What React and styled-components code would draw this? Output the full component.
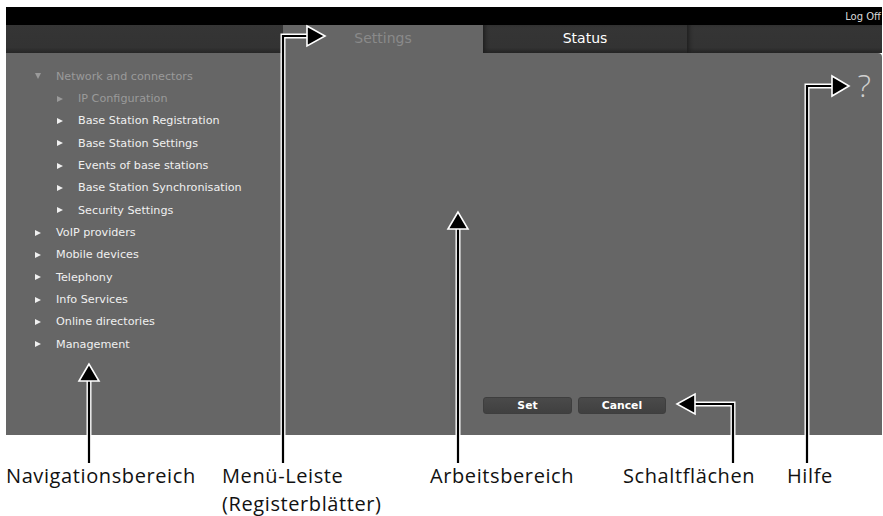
import React from "react";
import styled, { createGlobalStyle } from "styled-components";

const Global = createGlobalStyle`
  html, body { margin: 0; padding: 0; background: #fff; }
  body { width: 883px; height: 516px; overflow: hidden; }
  #root { position: relative; width: 883px; height: 516px; }
`;

const Page = styled.div`
  position: relative;
  width: 883px;
  height: 516px;
  padding: 7px 1px 0 6px;
  box-sizing: border-box;
  font-family: "DejaVu Sans", Verdana, sans-serif;
`;

const Screen = styled.div`
  display: flex;
  flex-direction: column;
  width: 876px;
`;

const TopBar = styled.div`
  height: 18px;
  background: #000;
  display: flex;
  justify-content: flex-end;
  align-items: center;
  padding-right: 1px;
  font-size: 10px;
  color: #d8d8d8;
`;

const TabBar = styled.div`
  height: 28px;
  display: flex;
  background: #333;
`;

const TabSpacer = styled.div`
  width: ${(p) => p.$w}px;
  flex: ${(p) => (p.$w ? "none" : "1")};
  background: linear-gradient(#353535 0, #333 80%, #262626 100%);
  box-shadow: ${(p) => (p.$shadowLeft ? "inset 4px 0 4px -2px #1e1e1e" : "none")};
`;

const Tab = styled.div`
  width: ${(p) => p.$w}px;
  display: flex;
  align-items: center;
  justify-content: center;
  font-size: 14px;
  color: ${(p) => (p.$active ? "#8a8a8a" : "#fff")};
  background: ${(p) =>
    p.$active ? "#666" : "linear-gradient(#353535 0, #333 80%, #262626 100%)"};
  box-shadow: ${(p) => (p.$active ? "none" : "inset 4px 0 4px -2px #1e1e1e")};
  padding-bottom: 2px;
  box-sizing: border-box;
`;

const Main = styled.div`
  height: 382px;
  background: #666;
  display: grid;
  grid-template-columns: 277px 1fr;
  border-top-right-radius: 4px;
`;

const Nav = styled.ul`
  list-style: none;
  margin: 0;
  padding: 12px 0 0 0;
`;

const NavRow = styled.li`
  height: 22.35px;
  display: flex;
  align-items: center;
  padding-left: ${(p) => 29 + p.$level * 22}px;
  font-size: 11.2px;
  color: ${(p) => (p.$dim ? "#9a9a9a" : "#f0f0f0")};
  white-space: nowrap;
`;

const Caret = styled.span`
  width: 21px;
  flex: none;
  display: flex;
  align-items: center;
  &::before {
    content: "";
    display: block;
    width: 0;
    height: 0;
    ${(p) =>
      p.$open
        ? `border-left: 3.5px solid transparent; border-right: 3.5px solid transparent; border-top: 6px solid currentColor;`
        : `border-top: 3.5px solid transparent; border-bottom: 3.5px solid transparent; border-left: 6px solid currentColor;`}
  }
`;

const Work = styled.div`
  position: relative;
  display: flex;
  flex-direction: column;
  justify-content: space-between;
`;

const HelpRow = styled.div`
  display: flex;
  justify-content: flex-end;
  padding: 15px 11px 0 0;
`;

const Help = styled.span`
  font-family: "Open Sans", "Noto Sans", sans-serif;
  font-size: 32px;
  line-height: 34px;
  color: #cfcfcf;
  font-weight: 300;
`;

const ButtonRow = styled.div`
  display: flex;
  gap: 6px;
  padding: 0 0 21px 200px;
`;

const Button = styled.button`
  width: ${(p) => p.$w}px;
  height: 17px;
  padding: 0;
  border: 1px solid #3e3e3e;
  border-radius: 3px;
  background: linear-gradient(#4a4a4a, #404040);
  color: #fff;
  font-family: "DejaVu Sans", Verdana, sans-serif;
  font-weight: bold;
  font-size: 10.8px;
  line-height: 15px;
`;

const Captions = styled.div`
  display: flex;
  margin-top: 27px;
  font-family: "Open Sans", "Noto Sans", sans-serif;
  font-size: 20px;
  line-height: 28px;
  color: #111;
  letter-spacing: 0.6px;
`;

const Caption = styled.div`
  width: ${(p) => p.$w}px;
  flex: none;
  white-space: nowrap;
`;

const Overlay = styled.svg`
  position: absolute;
  left: 0;
  top: 0;
  pointer-events: none;
`;

const callouts = [
  { d: "M89 380 V463", arrow: "89,364 79,381 99,381" },
  { d: "M283 463 V36 H308", arrow: "307,26 325,36 307,46" },
  { d: "M458 229 V463", arrow: "458,212 448,229 468,229" },
  { d: "M733 463 V404 H694", arrow: "677,404 695,394 695,414" },
  { d: "M807 463 V86 H833", arrow: "832,76 849,86 832,96" },
];

const navItems = [
  { label: "Network and connectors", level: 0, open: true, dim: true },
  { label: "IP Configuration", level: 1, dim: true },
  { label: "Base Station Registration", level: 1 },
  { label: "Base Station Settings", level: 1 },
  { label: "Events of base stations", level: 1 },
  { label: "Base Station Synchronisation", level: 1 },
  { label: "Security Settings", level: 1 },
  { label: "VoIP providers", level: 0 },
  { label: "Mobile devices", level: 0 },
  { label: "Telephony", level: 0 },
  { label: "Info Services", level: 0 },
  { label: "Online directories", level: 0 },
  { label: "Management", level: 0 },
];

export default function App() {
  return (
    <Page>
      <Global />
      <Screen>
        <TopBar>Log Off</TopBar>
        <TabBar>
          <TabSpacer $w={277} />
          <Tab $w={200} $active>
            Settings
          </Tab>
          <Tab $w={204}>Status</Tab>
          <TabSpacer $shadowLeft />
        </TabBar>
        <Main>
          <Nav>
            {navItems.map((it) => (
              <NavRow key={it.label} $level={it.level} $dim={it.dim}>
                <Caret $open={it.open} />
                {it.label}
              </NavRow>
            ))}
          </Nav>
          <Work>
            <HelpRow>
              <Help>?</Help>
            </HelpRow>
            <ButtonRow>
              <Button $w={89}>Set</Button>
              <Button $w={88}>Cancel</Button>
            </ButtonRow>
          </Work>
        </Main>
      </Screen>
      <Captions>
        <Caption $w={216}>Navigationsbereich</Caption>
        <Caption $w={208}>
          Menü-Leiste
          <br />
          (Registerblätter)
        </Caption>
        <Caption $w={193}>Arbeitsbereich</Caption>
        <Caption $w={164}>Schaltflächen</Caption>
        <Caption $w={80}>Hilfe</Caption>
      </Captions>
      <Overlay width="883" height="516" viewBox="0 0 883 516">
        {callouts.map((c, i) => (
          <g key={i}>
            <path d={c.d} fill="none" stroke="#fff" strokeWidth="5" />
            <path d={c.d} fill="none" stroke="#000" strokeWidth="2.2" />
            <polygon points={c.arrow} fill="#000" stroke="#fff" strokeWidth="1.6" strokeLinejoin="miter" />
          </g>
        ))}
      </Overlay>
    </Page>
  );
}
